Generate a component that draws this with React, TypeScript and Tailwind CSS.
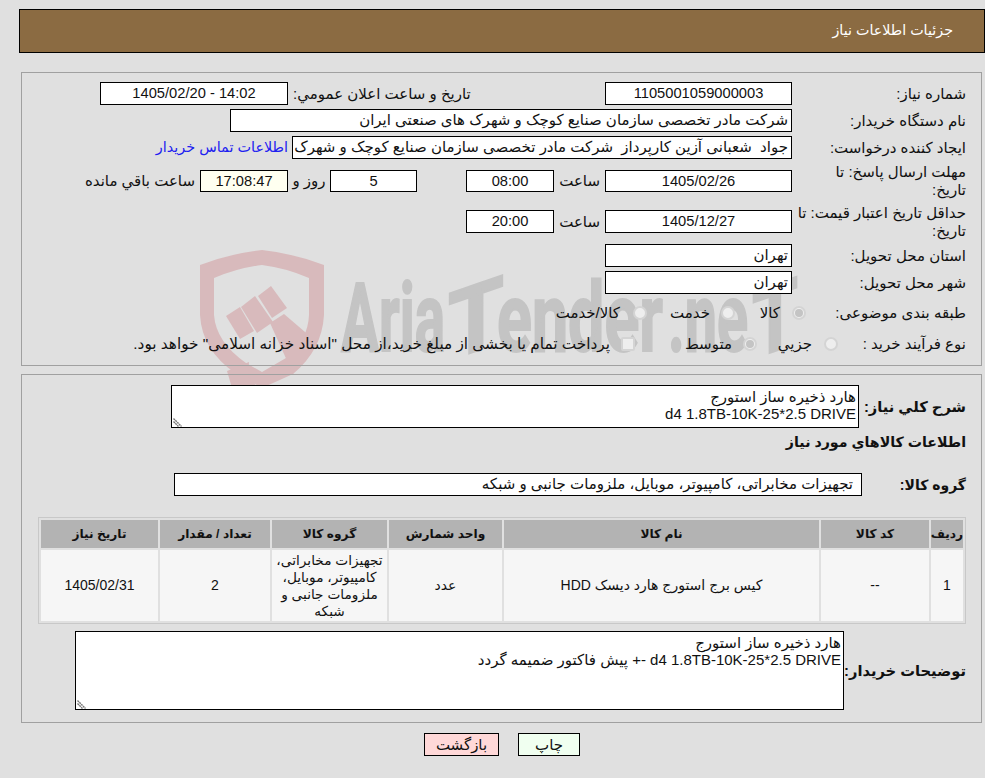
const font = "font-['Liberation_Sans','DejaVu_Sans',sans-serif]";
const num = "justify-center text-[14.7px]";

function Box({ className = "", children }: { className?: string; children?: React.ReactNode }) {
  return (
    <div className={"h-full shrink-0 border border-black bg-white flex items-center overflow-hidden whitespace-pre " + className}>
      {children}
    </div>
  );
}

function Label({ className = "w-[174px]", children }: { className?: string; children: React.ReactNode }) {
  return <div className={"shrink-0 leading-[18px] text-[#111] " + className}>{children}</div>;
}

function Radio({ checked }: { checked?: boolean }) {
  return (
    <span className="w-[14px] h-[14px] shrink-0 rounded-full border-2 border-[#d4d4d4] bg-[#eeeeee] flex items-center justify-center">
      {checked && <span className="w-[8px] h-[8px] rounded-full bg-[#c4c4c4]" />}
    </span>
  );
}

function Note({ className, value }: { className: string; value: string }) {
  return (
    <div className={"relative shrink-0 " + className}>
      <textarea
        readOnly
        className="block w-full h-full resize-none border border-black bg-white p-[2px] leading-[17px] outline-none"
        defaultValue={value}
      />
      <svg className="absolute left-[2px] bottom-[1px]" width="10" height="10" viewBox="0 0 10 10">
        <path d="M0.5 1.5L8.5 9.5M0.5 4.5L5.5 9.5" stroke="#777" strokeWidth="1.4" strokeDasharray="2 0.6" fill="none" />
      </svg>
    </div>
  );
}

function Watermark() {
  const txt = { fontFamily: "Roboto, sans-serif", fontWeight: 700, fill: "#c4c4c4", stroke: "#c4c4c4", strokeWidth: 2 };
  return (
    <svg className="absolute left-0 top-0" width="985" height="778" viewBox="0 0 985 778">
      <g fill="#d8babc">
        <path
          fillRule="evenodd"
          d="M200 265Q232 253 262 250Q292 253 324 265L324 315Q322 350 293 374L262 388L235 373Q202 350 200 315ZM214 278L214 315Q216 342 246 363L262 372L286 358Q308 340 309 315L309 278Q286 268 262 265Q238 268 214 278Z"
        />
        <path d="M226 316L240 307L254 331L240 339Z" />
        <path d="M241 307L255 296L273 322L257 333Z" />
        <path d="M258 296L271 286L287 308L272 318Z" />
        <path d="M270 323L284 314L312 338L293 374Z" />
        <path d="M227 371L249 362L248 376L258 388L232 388Z" />
      </g>
      <g direction="ltr" {...txt}>
        <text x="341" y="351" fontSize="96" textLength="104" lengthAdjust="spacingAndGlyphs">Aria</text>
        <text transform="translate(476 351) skewY(-19)" x="-28" y="0" fontSize="94" textLength="56" lengthAdjust="spacingAndGlyphs">T</text>
        <text x="497" y="351" fontSize="96" textLength="166" lengthAdjust="spacingAndGlyphs">ender</text>
        <text x="668" y="351" fontSize="96" textLength="80" lengthAdjust="spacingAndGlyphs">.ne</text>
        <text transform="translate(775 351) skewY(-19)" x="-23" y="0" fontSize="94" textLength="46" lengthAdjust="spacingAndGlyphs">T</text>
      </g>
    </svg>
  );
}

const th = "bg-[#b3b3b3] text-[12.2px] font-bold text-[#111] text-center p-0";
const td = "bg-[#f6f6f6] text-[14px] leading-[17px] text-[#111] text-center p-0";

export default function App() {
  return (
    <div dir="rtl" className={"relative w-[985px] h-[778px] overflow-hidden bg-[#e0e0e0] pt-[9px] text-[15px] text-[#111] " + font}>
      <Watermark />
      <div className="relative">
        <header className="ml-[19px] h-[44px] border border-black bg-[#8b6b42] pr-[31px] flex items-center text-[14.3px] text-white">
          جزئیات اطلاعات نیاز
        </header>

        <section className="mt-[19px] ml-[21px] mr-[3px] h-[294px] border border-[#a0a0a0] pt-[9px] pr-[15px] flex flex-col gap-[4px]">
          <div className="h-[23px] flex items-center">
            <Label>شماره نیاز:</Label>
            <Box className={"w-[187px] " + num}>1105001059000003</Box>
            <Label className="w-[317px] text-left pl-[5px]">تاریخ و ساعت اعلان عمومي:</Label>
            <Box className={"w-[188px] " + num}>14:02 - 1405/02/20</Box>
          </div>
          <div className="h-[23px] flex items-center">
            <Label>نام دستگاه خریدار:</Label>
            <Box className="w-[562px] pr-[3px]">شرکت مادر تخصصی سازمان صنایع کوچک و شهرک های صنعتی ایران</Box>
          </div>
          <div className="h-[23px] flex items-center">
            <Label>ایجاد کننده درخواست:</Label>
            <Box className="w-[500px] pr-[3px]">جواد  شعبانی آزین کارپرداز  شرکت مادر تخصصی سازمان صنایع کوچک و شهرک</Box>
            <a href="#" className="mr-[4px] text-[14.4px] text-[#2020f0] whitespace-nowrap">اطلاعات تماس خریدار</a>
          </div>
          <div className="h-[36px] flex items-center">
            <Label>مهلت ارسال پاسخ: تا<br />تاریخ:</Label>
            <div className="h-[22px] flex items-center">
              <Box className={"w-[187px] " + num}>1405/02/26</Box>
              <Label className="w-[51px] pr-[5px]">ساعت</Label>
              <Box className={"w-[88px] " + num}>08:00</Box>
              <div className="w-[49px]" />
              <Box className={"w-[87px] " + num}>5</Box>
              <Label className="w-[42px] text-center">روز و</Label>
              <Box className={"w-[88px] !bg-[#fffff0] " + num}>17:08:47</Box>
              <Label className="w-auto pr-[5px]">ساعت باقي مانده</Label>
            </div>
          </div>
          <div className="h-[37px] flex items-center">
            <Label>حداقل تاریخ اعتبار قیمت: تا<br />تاریخ:</Label>
            <div className="h-[23px] flex items-center">
              <Box className={"w-[187px] " + num}>1405/12/27</Box>
              <Label className="w-[51px] pr-[5px]">ساعت</Label>
              <Box className={"w-[88px] " + num}>20:00</Box>
            </div>
          </div>
          <div className="h-[23px] flex items-center">
            <Label>استان محل تحویل:</Label>
            <Box className="w-[187px] pr-[3px]">تهران</Box>
          </div>
          <div className="h-[23px] flex items-center">
            <Label>شهر محل تحویل:</Label>
            <Box className="w-[187px] pr-[3px]">تهران</Box>
          </div>
          <div className="h-[30px] flex items-center">
            <Label className="w-[160px] whitespace-nowrap">طبقه بندی موضوعی:</Label>
            <div className="w-[71px] flex items-center gap-[12px]">
              <Radio checked />
              <span>کالا</span>
            </div>
            <div className="w-[88px] flex items-center gap-[11px]">
              <Radio />
              <span>خدمت</span>
            </div>
            <div className="flex items-center gap-[13px]">
              <Radio />
              <span>کالا/خدمت</span>
            </div>
          </div>
          <div className="h-[24px] flex items-center">
            <Label className="w-[128px] whitespace-nowrap">نوع فرآیند خرید :</Label>
            <div className="w-[81px] flex items-center gap-[12px]">
              <Radio />
              <span>جزیي</span>
            </div>
            <div className="w-[122px] flex items-center gap-[11px]">
              <Radio checked />
              <span>متوسط</span>
            </div>
            <div className="flex items-center gap-[11px]">
              <span className="w-[14px] h-[14px] shrink-0 rounded-[2px] border-2 border-[#d4d4d4] bg-[#eeeeee]" />
              <span className="text-[15.3px] whitespace-nowrap">پرداخت تمام یا بخشی از مبلغ خرید،از محل "اسناد خزانه اسلامی" خواهد بود.</span>
            </div>
          </div>
        </section>

        <section className="mt-[8px] ml-[21px] mr-[3px] h-[349px] border border-[#a0a0a0] pt-[10px] pr-[15px]">
          <div className="flex items-center">
            <Label className="w-[107px] font-bold text-[14.7px]">شرح كلي نياز:</Label>
            <Note className="w-[688px] h-[43px]" value={"هارد ذخیره ساز استورج\nd4 1.8TB-10K-25*2.5 DRIVE"} />
          </div>
          <div className="h-[30px] flex items-center text-[14.2px] font-bold">اطلاعات كالاهاي مورد نياز</div>
          <div className="mt-[15px] h-[23px] flex items-center">
            <Label className="w-[104px] font-bold text-[14px]">گروه كالا:</Label>
            <Box className="w-[688px] pr-[8px]">تجهیزات مخابراتی، کامپیوتر، موبایل، ملزومات جانبی و شبکه</Box>
          </div>
          <table className="mt-[21px] w-[928px] table-fixed border-separate border-spacing-[2px] border border-[#c8c8c8]">
            <colgroup>
              <col className="w-[32px]" />
              <col className="w-[108px]" />
              <col className="w-[315px]" />
              <col className="w-[113px]" />
              <col className="w-[115px]" />
              <col className="w-[110px]" />
              <col className="w-[117px]" />
            </colgroup>
            <thead>
              <tr className="h-[28px]">
                <th className={th}>ردیف</th>
                <th className={th}>کد کالا</th>
                <th className={th}>نام کالا</th>
                <th className={th}>واحد شمارش</th>
                <th className={th}>گروه کالا</th>
                <th className={th}>تعداد / مقدار</th>
                <th className={th}>تاریخ نیاز</th>
              </tr>
            </thead>
            <tbody>
              <tr className="h-[71px]">
                <td className={td}>1</td>
                <td className={td}>--</td>
                <td className={td}>کیس برج استورج هارد دیسک HDD</td>
                <td className={td}>عدد</td>
                <td className={td + " !text-[13.7px]"}>تجهیزات مخابراتی، کامپیوتر، موبایل، ملزومات جانبی و شبکه</td>
                <td className={td}>2</td>
                <td className={td}>1405/02/31</td>
              </tr>
            </tbody>
          </table>
          <div className="mt-[7px] flex items-center">
            <Label className="w-[122px] font-bold text-[14.7px] whitespace-nowrap">توضیحات خریدار:</Label>
            <Note className="w-[769px] h-[79px]" value={"هارد ذخیره ساز استورج\nd4 1.8TB-10K-25*2.5 DRIVE -+ پیش فاکتور ضمیمه گردد"} />
          </div>
        </section>

        <div className="mt-[10px] pr-[405px] flex gap-[19px]">
          <button className="w-[62px] h-[23px] border border-black bg-[#f0fff0]">چاپ</button>
          <button className="w-[75px] h-[23px] border border-black bg-[#ffd8d8]">بازگشت</button>
        </div>
      </div>
    </div>
  );
}
